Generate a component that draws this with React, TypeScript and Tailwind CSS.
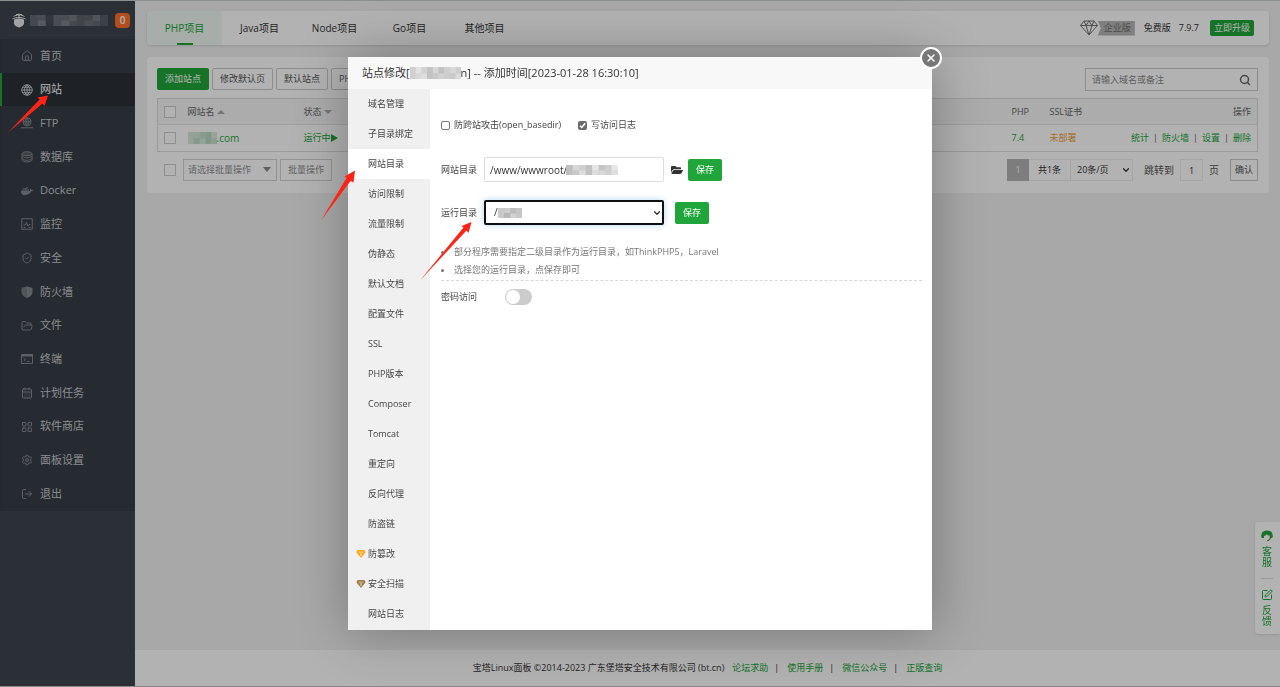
// App.tsx
import type { ComponentType, ReactNode } from 'react';
import {
  CalendarDays,
  ChevronDown,
  FolderOpen,
  House,
  LayoutGrid,
  LogOut,
  Search,
  Settings,
  ShieldCheck,
  SquarePen,
  X,
} from 'lucide-react';
import { FaDocker, FaFolderOpen } from 'react-icons/fa';

type IconProps = { className?: string; strokeWidth?: number };

function GlobeIcon({ className }: IconProps) {
  return (
    <svg viewBox="0 0 24 24" className={className} fill="none" stroke="currentColor" strokeWidth="2">
      <circle cx="12" cy="12" r="10.5" />
      <path d="M1.500 12h21M3.500 6.500h17M3.500 17.500h17M12 1.500v21M12 1.500c-7 6-7 15 0 21c7-6 7-15 0-21" />
    </svg>
  );
}

function DatabaseIcon({ className }: IconProps) {
  return (
    <svg viewBox="0 0 24 24" className={className} fill="none" stroke="currentColor" strokeWidth="2">
      <ellipse cx="12" cy="5.500" rx="10" ry="4" fill="currentColor" fillOpacity="0.4" />
      <path d="M2 5.500v4c0 2.200 4.500 4 10 4s10-1.800 10-4v-4M2 10v4.500c0 2.200 4.500 4 10 4s10-1.800 10-4V10M2 14.500V18c0 2.200 4.500 4 10 4s10-1.800 10-4v-3.500" />
    </svg>
  );
}

function FtpIcon({ className }: IconProps) {
  return (
    <svg viewBox="0 0 24 24" className={className} fill="none" stroke="currentColor" strokeWidth="2">
      <circle cx="12" cy="9.500" r="8" />
      <path d="M4 9.500h16M12 1.500v16M12 1.500c-5 4-5 12 0 16c5-4 5-12 0-16M0 21.500h24" />
    </svg>
  );
}

function MonitorIcon({ className }: IconProps) {
  return (
    <svg viewBox="0 0 24 24" className={className} fill="none" stroke="currentColor" strokeWidth="2">
      <path d="M1.500 1.500h21v21h-21zM5 14h4l2-5 3 7 2-3h3M5 19h4M15 19h4" />
    </svg>
  );
}

function FirewallIcon({ className }: IconProps) {
  return (
    <svg viewBox="0 0 24 24" className={className} fill="currentColor">
      <path d="M12 0C9 2 5 3.500 1 3.500V12c0 6 5 10 11 12z" fillOpacity="0.8" />
      <path d="M12 0c3 2 7 3.500 11 3.500V12c0 6-5 10-11 12z" />
    </svg>
  );
}

function TerminalIcon({ className }: IconProps) {
  return (
    <svg viewBox="0 0 24 24" className={className} fill="none" stroke="currentColor" strokeWidth="2">
      <path d="M1 3h22v18H1z" />
      <path d="M1 5h22" strokeWidth="4" />
      <path d="M5.500 10l3.500 3-3.500 3M11.500 17h5" />
    </svg>
  );
}

function DiamondIcon({ className }: IconProps) {
  return (
    <svg viewBox="0 0 20 17" className={className} fill="currentColor">
      <path d="M3 0h14l3 5-10 12L0 5z" />
      <path d="M4.500 4.500h11M8 5l2 8 2-8" fill="none" stroke="#fff" strokeOpacity="0.55" strokeWidth="1.5" />
    </svg>
  );
}

function HeadsetIcon() {
  return (
    <svg viewBox="0 0 24 24" className="size-3" fill="currentColor">
      <path d="M1 10C1 4 6 1 12 1s11 3 11 9c1 .5 1 5-1 6h-2c-1.500 4-4 6-8 6.500v-2c3-.5 5-2.500 5.500-5V11c-3 0-5-1-6.500-2.500C9.500 10.500 8 11.500 6 12v4H2c-2-1-2-5.500-1-6z" />
    </svg>
  );
}

const menus: { name: string; icon: ComponentType<IconProps>; active?: boolean }[] = [
  { name: '首页', icon: House },
  { name: '网站', icon: GlobeIcon, active: true },
  { name: 'FTP', icon: FtpIcon },
  { name: '数据库', icon: DatabaseIcon },
  { name: 'Docker', icon: FaDocker },
  { name: '监控', icon: MonitorIcon },
  { name: '安全', icon: ShieldCheck },
  { name: '防火墙', icon: FirewallIcon },
  { name: '文件', icon: FolderOpen },
  { name: '终端', icon: TerminalIcon },
  { name: '计划任务', icon: CalendarDays },
  { name: '软件商店', icon: LayoutGrid },
  { name: '面板设置', icon: Settings },
  { name: '退出', icon: LogOut },
];

const projectTabs = ['PHP项目', 'Java项目', 'Node项目', 'Go项目', '其他项目'];

const siteTabs = [
  '域名管理', '子目录绑定', '网站目录', '访问限制', '流量限制', '伪静态',
  '默认文档', '配置文件', 'SSL', 'PHP版本', 'Composer', 'Tomcat',
  '重定向', '反向代理', '防盗链', '防篡改', '安全扫描', '网站日志',
];

// masks private names with a row of blocks
function Mosaic({ colors, className }: { colors: string[]; className: string }) {
  return (
    <svg viewBox={`0 0 ${colors.length} 2`} preserveAspectRatio="none" className={className} aria-hidden="true">
      {colors.map((c, i) => (
        <g key={i} fill={c}>
          <rect x={i} y="0" width="1.05" height="1.1" fillOpacity={i % 3 === 1 ? 0.7 : 1} />
          <rect x={i} y="1" width="1.05" height="1" fillOpacity={i % 3 === 2 ? 0.7 : 1} />
        </g>
      ))}
    </svg>
  );
}

function Sidebar() {
  return (
    <aside className="w-[135px] shrink-0 bg-[#3e464f]">
      <div className="flex h-[38px] items-center pl-3">
        <svg viewBox="0 0 28 30" className="h-[15px] w-3.5 text-[#e8e8e8]" fill="none" stroke="currentColor" strokeWidth="2">
          <path d="M14 1v10M3 7c5-4 17-4 22 0M1 12c6-4 20-4 26 0M8 3h12" />
          <path d="M4 13c6-3 14-3 20 0v8c0 4-5 6-10 8-5-2-10-4-10-8z" fill="currentColor" stroke="none" />
        </svg>
        <Mosaic
          colors={['#626872', '#7b8087', '#474e57', '#6a7078', '#7c828a', '#747a82', '#5c646d', '#6a7078', '#747a82', '#565d66']}
          className="ml-1 h-[11px] w-[78px]"
        />
        <span className="ml-[7px] flex size-[15px] items-center justify-center rounded bg-[#ff702a] text-[10px] font-semibold text-white">0</span>
      </div>
      <ul className="grid h-[472px] grid-rows-[repeat(14,minmax(0,1fr))] bg-[#363e46]">
        {menus.map(({ name, icon: Icon, active }) => (
          <li key={name} className={active ? 'border-l-2 border-[#20a53a] bg-[#2c3138]' : 'border-l-2 border-[#363b42]'}>
            <a href="#" className={`flex h-full items-center gap-[7px] pl-[19px] text-[11px] ${active ? 'text-white' : 'text-[#c6c9cc]'}`}>
              <Icon className={`size-3 ${active ? 'text-[#c4c7ca]' : 'text-[#858a90]'}`} strokeWidth={2} />
              {name}
            </a>
          </li>
        ))}
      </ul>
    </aside>
  );
}

function TopBar() {
  return (
    <header className="flex h-[34px] items-center justify-between rounded bg-white pr-[15px] shadow-sm">
      <nav className="flex h-full">
        {projectTabs.map((tab, i) => (
          <a
            key={tab}
            href="#"
            className={`flex h-full w-[75px] flex-col items-center text-[10px] ${i === 0 ? 'rounded-l bg-[#eff8f2] text-[#20a53a]' : 'text-[#333]'}`}
          >
            <span className="flex flex-1 items-center">{tab}</span>
            <span className={i === 0 ? '-mt-0.5 h-0.5 w-4 bg-[#20a53a]' : ''} />
          </a>
        ))}
      </nav>
      <div className="flex items-center text-[9px] text-[#333]">
        <svg viewBox="0 0 36 32" className="h-4 w-[18px] text-[#737373]" fill="none" stroke="currentColor" strokeWidth="2">
          <path d="M8 2h20l7 9-17 19L1 11zM1 11h34M8 2l4 9 6 19 6-19 4-9M12 11l6-9 6 9" />
        </svg>
        <span className="flex h-[15px] items-center bg-[#b6b6b6] pl-1.5 pr-1 text-[#707070] [clip-path:polygon(0_0,100%_0,100%_100%,0_100%,8%_50%)]">企业版</span>
        <span className="ml-[9px]">免费版</span>
        <span className="ml-2">7.9.7</span>
        <button className="ml-[11px] h-4 rounded-xs bg-[#20a53a] px-1 text-[9px] text-white">立即升级</button>
      </div>
    </header>
  );
}

function OutlineButton({ children }: { children: ReactNode }) {
  return <button className="h-[22px] rounded-xs border border-[#ccc] px-[7px] text-[9px] text-[#555]">{children}</button>;
}

function SiteTable() {
  return (
    <table className="mt-[7px] w-full table-fixed border border-[#ddd] text-left text-[9px] text-[#666]">
      <colgroup>
        <col className="w-[30px]" />
        <col className="w-[116px]" />
        <col />
        <col className="w-[38px]" />
        <col className="w-[60px]" />
        <col className="w-[148px]" />
      </colgroup>
      <thead>
        <tr className="h-[26px] border-b border-[#e4e4e4] bg-[#f6f6f6]">
          <th className="pl-1.5"><SiteCheckbox label="全选" /></th>
          <th className="font-normal">网站名 <Caret up /></th>
          <th className="font-normal">状态 <Caret /></th>
          <th className="font-normal">PHP</th>
          <th className="font-normal">SSL证书</th>
          <th className="pr-1.5 text-right font-normal">操作</th>
        </tr>
      </thead>
      <tbody>
        <tr className="h-[27px] text-[#20a53a]">
          <td className="pl-1.5"><SiteCheckbox label="选择站点" /></td>
          <td>
            <a href="#" className="flex items-center text-[10px]">
              <Mosaic colors={['#d8e6dc', '#bfdcc6', '#c2dec9', '#b9d9c1', '#cbe0d0']} className="h-3 w-[29px]" />
              .com
            </a>
          </td>
          <td>
            <a href="#" className="flex items-center">
              运行中
              <svg viewBox="0 0 7 8" className="h-2 w-[7px]" fill="currentColor"><path d="M0 0l7 4-7 4z" /></svg>
            </a>
          </td>
          <td><a href="#">7.4</a></td>
          <td><a href="#" className="text-[#f0a040]">未部署</a></td>
          <td className="pr-1.5">
            <div className="flex justify-end gap-1">
              <a href="#">统计</a><span className="text-[#666]">|</span>
              <a href="#">防火墙</a><span className="text-[#666]">|</span>
              <a href="#">设置</a><span className="text-[#666]">|</span>
              <a href="#">删除</a>
            </div>
          </td>
        </tr>
      </tbody>
    </table>
  );
}

function SiteCheckbox({ label }: { label: string }) {
  return <input type="checkbox" aria-label={label} className="block size-3 appearance-none border border-[#ccc] bg-white" />;
}

function Caret({ up }: { up?: boolean }) {
  return (
    <svg viewBox="0 0 8 4" className="inline h-1 w-2 text-[#aaa]" fill="currentColor">
      <path d={up ? 'M4 0l4 4H0z' : 'M0 0h8L4 4z'} />
    </svg>
  );
}

function SitePanel() {
  return (
    <section className="mt-3 rounded bg-white pb-3 pl-2.5 pr-[11px] pt-[11px]">
      <div className="flex items-start justify-between">
        <div className="flex gap-[3px]">
          <button className="h-[22px] rounded-xs bg-[#20a53a] px-2 text-[9px] text-white">添加站点</button>
          <OutlineButton>修改默认页</OutlineButton>
          <OutlineButton>默认站点</OutlineButton>
          <OutlineButton>PHP</OutlineButton>
        </div>
        <div className="flex h-[23px] w-[173px] items-center border border-[#ccc] px-1.5">
          <input
            type="text"
            aria-label="搜索站点"
            placeholder="请输入域名或备注"
            className="min-w-0 flex-1 text-[9px] outline-none placeholder:text-[#888]"
          />
          <Search className="size-3 text-[#666]" strokeWidth={3} />
        </div>
      </div>
      <SiteTable />
      <div className="mt-[7px] flex h-[22px] items-center justify-between text-[9px] text-[#555]">
        <div className="flex h-full items-center pl-[7px]">
          <SiteCheckbox label="选择全部站点" />
          <div className="relative ml-[7px] h-full">
            <select aria-label="批量操作" className="h-full w-[94px] appearance-none border border-[#d4d4d4] px-1 text-[#909090]">
              <option>请选择批量操作</option>
            </select>
            <svg viewBox="0 0 8 5" className="pointer-events-none absolute right-1.5 top-2 h-[5px] w-2 text-[#888]" fill="currentColor"><path d="M0 0h8L4 5z" /></svg>
          </div>
          <button className="ml-[3px] h-full border border-[#d4d4d4] px-[7px] text-[#909090]">批量操作</button>
        </div>
        <div className="flex h-full items-center">
          <span className="flex h-full w-[22px] items-center justify-center bg-[#b3b3b3] text-white">1</span>
          <span className="flex h-full w-[41px] items-center justify-center border-y border-[#eee] text-[#333]">共1条</span>
          <div className="relative h-full">
            <select aria-label="每页条数" className="h-full w-[63px] appearance-none border border-[#eee] px-1.5 text-[#333]">
              <option>20条/页</option>
            </select>
            <ChevronDown className="pointer-events-none absolute right-0.5 top-1.5 size-2.5 text-[#333]" strokeWidth={3} />
          </div>
          <label htmlFor="page" className="ml-[11px] text-[10px]">跳转到</label>
          <input id="page" type="text" defaultValue="1" className="ml-1.5 h-full w-[23px] border border-[#eee] text-center text-[#333]" />
          <span className="ml-1.5 text-[10px]">页</span>
          <button className="ml-[11px] h-full w-7 border border-[#ccc]">确认</button>
        </div>
      </div>
    </section>
  );
}

function Footer() {
  return (
    <footer className="flex h-9 items-center justify-center gap-2 bg-white text-[9px] text-[#333]">
      <span>宝塔Linux面板 ©2014-2023 广东堡塔安全技术有限公司 (bt.cn)</span>
      {['论坛求助', '使用手册', '微信公众号', '正版查询'].map((link, i) => (
        <span key={link} className="flex gap-1.5">
          <a href="#" className="text-[#20a53a]">{link}</a>
          {i < 3 && <span>|</span>}
        </span>
      ))}
    </footer>
  );
}

function SideTools() {
  return (
    <div className="fixed right-0 top-[522px] flex w-[25px] flex-col items-center rounded-l bg-white pb-[7px] pr-px pt-2 text-[10px] leading-[11px] text-[#20a53a] shadow">
      <a href="#" className="flex flex-col items-center gap-1 border-b border-[#ddd] pb-2.5">
        <HeadsetIcon />
        <span className="w-3 text-center">客服</span>
      </a>
      <a href="#" className="flex flex-col items-center gap-1 pt-2.5">
        <SquarePen className="size-3" />
        <span className="w-3 text-center">反馈</span>
      </a>
    </div>
  );
}

function SaveButton() {
  return <button className="h-[22px] rounded-xs bg-[#20a53a] px-2 text-[9px] text-white">保存</button>;
}

function DirectoryForm() {
  return (
    <form className="flex-1 pl-[11px] pr-2.5 pt-[29px] text-[9px] text-[#444]">
      <div className="flex h-3.5 items-center">
        <label className="flex items-center gap-1">
          <input type="checkbox" className="size-[9px] appearance-none rounded-xs border border-[#767676]" />
          防跨站攻击(open_basedir)
        </label>
        <label className="ml-[17px] flex items-center gap-1">
          <span className="relative flex size-[9px]">
            <input type="checkbox" defaultChecked className="size-[9px] appearance-none rounded-xs bg-[#6b6b6b]" />
            <svg viewBox="0 0 9 9" className="pointer-events-none absolute inset-0 size-[9px]" fill="none" stroke="#fff" strokeWidth="1.5"><path d="M2 4.800l1.800 1.700L7.200 2.300" /></svg>
          </span>
          写访问日志
        </label>
      </div>
      <div className="mt-[25px] flex items-center">
        <label htmlFor="path" className="w-[43px]">网站目录</label>
        <div className="relative">
          <input id="path" type="text" defaultValue="/www/wwwroot/" className="block h-[25px] w-[180px] rounded-xs border border-[#ddd] px-[5px] text-[10px] text-[#333] outline-none" />
          <Mosaic colors={['#bfbfbf', '#c8c8c8', '#cfcfcf', '#c2c2c2', '#dcdcdc', '#c6c6c6', '#cfcfcf', '#dedede']} className="absolute left-[82px] top-2 h-2.5 w-[52px]" />
        </div>
        <FaFolderOpen className="ml-[7px] mr-[5px] size-3 text-[#333]" />
        <SaveButton />
      </div>
      <div className="mt-[18px] flex items-center">
        <label htmlFor="run" className="w-[43px]">运行目录</label>
        <div className="relative mr-[11px]">
          <select id="run" className="block h-[25px] w-[180px] appearance-none rounded-xs border-2 border-[#101010] px-2 text-[10px] text-[#333] shadow-[0_0_6px_rgba(102,175,233,0.5)] outline-none">
            <option>/</option>
          </select>
          <Mosaic colors={['#c9c9c9', '#b9b9b9', '#bebebe', '#c6c6c6']} className="absolute left-3.5 top-2 h-2.5 w-6" />
          <ChevronDown className="pointer-events-none absolute right-0.5 top-2 size-2.5 text-[#333]" strokeWidth={3} />
        </div>
        <SaveButton />
      </div>
      <ul className="mt-[18px] list-disc border-b border-dashed border-[#d8d8d8] pb-px pl-[13px] leading-[18px] text-[#777]">
        <li>部分程序需要指定二级目录作为运行目录，如ThinkPHP5，Laravel</li>
        <li>选择您的运行目录，点保存即可</li>
      </ul>
      <label className="mt-2 flex h-4 items-center">
        <span className="w-16">密码访问</span>
        <input
          type="checkbox"
          role="switch"
          className="h-4 w-[27px] appearance-none rounded-full bg-[#ccc] p-px before:block before:size-3.5 before:rounded-full before:bg-white before:content-['']"
        />
      </label>
    </form>
  );
}

function SiteModal() {
  return (
    <div className="fixed inset-0 flex items-center justify-center bg-black/30">
      <div role="dialog" aria-label="站点修改" className="relative w-[584px] bg-white shadow-[1px_1px_50px_rgba(0,0,0,0.3)]">
        <h2 className="flex h-8 items-center bg-[#f8f8f8] pl-3.5 text-[11px] text-[#333]">
          站点修改[
          <Mosaic colors={['#d0d0d0', '#d8d8d8', '#d2d2d2', '#c3c3c3', '#c9c9c9', '#c2c2c2', '#cecece', '#cacaca', '#cfcfcf']} className="h-3 w-[51px]" />
          n] -- 添加时间[2023-01-28 16:30:10]
        </h2>
        <div className="flex">
          <nav className="w-[82px] bg-[#f0f0f0] pb-px">
            {siteTabs.map((tab) => (
              <a
                key={tab}
                href="#"
                className={`flex h-[30px] items-center text-[9px] text-[#444] ${tab === '网站目录' ? 'bg-white' : ''}`}
              >
                <span className="flex w-5 justify-end pr-0.5">
                  {tab === '防篡改' && <DiamondIcon className="h-2 w-2.5 text-[#fba81c]" />}
                  {tab === '安全扫描' && <DiamondIcon className="h-2 w-2.5 text-[#a07c46]" />}
                </span>
                {tab}
              </a>
            ))}
          </nav>
          <DirectoryForm />
        </div>
        <button
          aria-label="关闭"
          className="absolute -right-2.5 -top-2.5 flex size-[22px] items-center justify-center rounded-full border-2 border-white bg-[#777] text-white"
        >
          <X className="size-3" strokeWidth={3} />
        </button>
      </div>
    </div>
  );
}

function GuideArrows() {
  return (
    <svg width="480" height="290" className="pointer-events-none absolute left-0 top-0 text-[#fd2416]" fill="currentColor">
      <path d="M8 132.500L39.500 99.500L37.500 97.500L48 95.500L44.500 106L42.500 103.500Z" />
      <path d="M321 220.500L346.500 178L344.500 176.500L355 170.500L353.500 182.500L350.500 181Z" />
      <path d="M420 280.500L463.500 227.500L461.500 226L471.500 222L468.500 233L466.500 230.500Z" />
    </svg>
  );
}

export default function App() {
  return (
    <div className="flex min-h-screen border-y border-t-[#c8cccc] border-b-[#c4c0cc] bg-[#f1f1f1] font-['Open_Sans','Noto_Sans_CJK_SC',sans-serif]">
      <Sidebar />
      <div className="flex min-w-0 flex-1 flex-col">
        <main className="flex-1 pl-3 pr-[11px] pt-2.5">
          <TopBar />
          <SitePanel />
        </main>
        <Footer />
      </div>
      <SideTools />
      <SiteModal />
      <GuideArrows />
    </div>
  );
}
